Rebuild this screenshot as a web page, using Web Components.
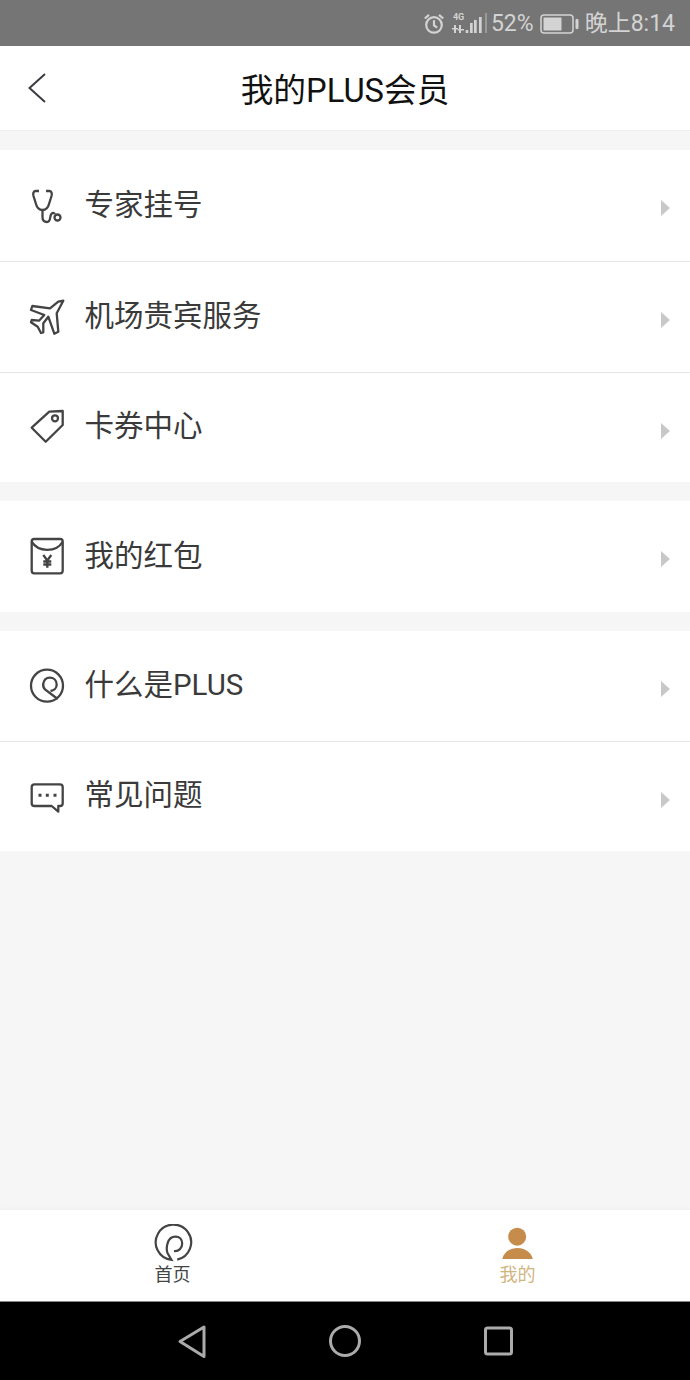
<!DOCTYPE html>
<html>
<head>
<meta charset="utf-8">
<style>
  html, body { margin: 0; padding: 0; background: #f6f6f6; }
  body { width: 690px; height: 1380px; font-family: Roboto, "Noto Sans CJK SC", sans-serif; }
  #app { display: flex; flex-direction: column; height: 1380px; }
</style>
</head>
<body>
<div id="app">
  <status-bar></status-bar>
  <title-bar>我的PLUS会员</title-bar>
  <menu-group style="margin-top:19px">
    <menu-row icon="stethoscope" h="112" pb="7">专家挂号</menu-row>
    <menu-row icon="plane" h="111" pb="9">机场贵宾服务</menu-row>
    <menu-row icon="tag" h="109" pb="9" last>卡券中心</menu-row>
  </menu-group>
  <menu-group style="margin-top:19px">
    <menu-row icon="packet" h="111" pb="7" last>我的红包</menu-row>
  </menu-group>
  <menu-group style="margin-top:19px">
    <menu-row icon="plus" h="111" pb="9">什么是PLUS</menu-row>
    <menu-row icon="chat" h="109" pb="9" last>常见问题</menu-row>
  </menu-group>
  <tab-bar></tab-bar>
  <nav-bar></nav-bar>
</div>

<script>
// icons for the menu rows, all drawn on a 40x40 box
const ICONS = {
  stethoscope: `<path d="M11 5H7.500C5 5 5 8 5.500 10L8 18C9 22 11 24 14.500 24C18 24 20 22 21 18L23.500 10C24 8 24 5 21.500 5H18"/><path d="M14.500 24V31C14.500 35 17 36 19 36C22 36 22 33 22.500 30C23 27 25.500 26 27 28"/><circle cx="29.500" cy="31.500" r="3"/>`,
  plane: `<path d="M35.300 2.700L28.700 15.300L30.300 33.700L26.300 35.700L20.300 18.700L15.300 25.300L15.300 34.300L13 35L9.700 28.700L3 24.300L3.700 22L11 22.700L16.300 17L3 12L4.300 8L22 10.300L30.300 3.700Z" stroke-linejoin="round"/>`,
  tag: `<path d="M21.300 2.700L34.700 2V16L17.700 32.700L3.700 18.700Z" stroke-linejoin="round"/><circle cx="27" cy="9.300" r="3"/>`,
  packet: `<rect x="3.700" y="2" width="31" height="34.300" rx="2.500"/><path d="M3.700 4.700C10 15.500 28.500 15.500 34.700 4.700"/><path d="M15.300 18L19.300 23.500L23.300 18M19.300 23.500V30.700M15.300 24.500H23.300M15.300 27.500H23.300"/>`,
  plus: `<circle cx="19" cy="18.700" r="16"/><path d="M29.700 32L17 22.500C15 20.500 15 18 15.300 16.500C16 13 18.500 10.700 21.700 10.700C25.700 10.700 28.700 13.500 28.700 17.500C28.700 21 26 23.500 22.500 24"/>`,
  chat: `<path d="M6.500 6.300H32C34 6.300 34.700 7.300 34.700 9V25.500C34.700 27 34 28 32 28H30.300V33.700L23.700 28H6.500C4.500 28 3.700 27 3.700 25.500V9C3.700 7.300 4.500 6.300 6.500 6.300Z" stroke-linejoin="round"/><path d="M10.500 17.300H13.500M17.800 17.300H20.800M25.500 17.300H28.500" stroke-width="3"/>`
};

class StatusBar extends HTMLElement {
  constructor() {
    super();
    this.attachShadow({mode: 'open'}).innerHTML = `
    <style>
      :host { display: flex; flex: none; height: 46px; box-sizing: border-box; background: #757575; color: #d3d3d3;
        align-items: center; justify-content: flex-end; padding: 2px 15px 0 0; font-size: 23px; line-height: 44px; }
      svg { display: block; flex: none; }
      .pct { margin-left: 3px; }
      .batt { margin-left: 6px; }
      .time { margin-left: 6px; }
      .net { font: bold 9px/9px Roboto, sans-serif; }
      .sig { position: relative; margin-left: 7px; width: 36px; height: 24px; flex: none; }
      .sig span { position: absolute; left: 1px; top: 1px; }
    </style>
    <svg width="22" height="24" viewBox="0 0 24 24" fill="none" stroke="#d3d3d3" stroke-width="2.400">
      <circle cx="12" cy="13" r="8.500"/><path d="M12 8v5.500l3.500 2.500M2 6l4.500-4M22 6l-4.500-4"/>
    </svg>
    <div class="sig"><span class="net">4G</span>
      <svg width="36" height="24" viewBox="0 0 36 24" fill="#d3d3d3">
        <path d="M2 13h2v8H2zM7 13h2v8H7zM0 16h6v1.500H0zM6 17h6v1.500H6z"/>
        <path d="M13.700 18h2.600v3h-2.600zM18 11h2.700v10H18zM22 8h2.700v13H22zM27 5h2.700v16H27z"/>
        <path d="M33 1h2v20h-2z" fill="#9a9a9a"/>
      </svg>
    </div>
    <span class="pct">52%</span>
    <svg class="batt" width="39" height="20" viewBox="0 0 39 20">
      <rect x="1" y="1" width="32" height="18" rx="3" fill="none" stroke="#d3d3d3" stroke-width="1.500"/>
      <rect x="3.500" y="3.500" width="18" height="13" fill="#d3d3d3"/>
      <rect x="35.500" y="5" width="3" height="10" rx="1" fill="#d3d3d3"/>
    </svg>
    <span class="time">晚上8:14</span>`;
  }
}
customElements.define('status-bar', StatusBar);

class TitleBar extends HTMLElement {
  constructor() {
    super();
    this.attachShadow({mode: 'open'}).innerHTML = `
    <style>
      :host { display: flex; flex: none; height: 85px; box-sizing: border-box; background: #fff; border-bottom: 1px solid #eeeeee;
        align-items: center; justify-content: center; position: relative; color: #111; font-size: 32.700px; padding-bottom: 2px; }
      svg { position: absolute; left: 28px; top: 27px; }
    </style>
    <svg width="20" height="32" viewBox="0 0 20 32" fill="none" stroke="#3b3b45" stroke-width="2"><path d="M17 1L1.500 15L17 29"/></svg>
    <slot></slot>`;
  }
}
customElements.define('title-bar', TitleBar);

class MenuGroup extends HTMLElement {
  constructor() {
    super();
    this.attachShadow({mode: 'open'}).innerHTML = `
    <style>:host { display: block; flex: none; background: #fff; }</style>
    <slot></slot>`;
  }
}
customElements.define('menu-group', MenuGroup);

class MenuRow extends HTMLElement {
  constructor() {
    super();
    this.attachShadow({mode: 'open'});
  }
  connectedCallback() {
    let icon = ICONS[this.getAttribute('icon')];
    let line = this.hasAttribute('last') ? '' : 'border-bottom: 1px solid #e6e6e6;';
    this.shadowRoot.innerHTML = `
    <style>
      :host { display: flex; height: ${this.getAttribute('h')}px; box-sizing: border-box; ${line}
        align-items: center; color: #3a3a3a; font-size: 29.500px; padding: 0 20px ${this.getAttribute('pb')}px 28px; }
      svg.i { flex: none; align-self: flex-start; margin: 36px 16.500px 0 0; }
      .txt { flex: 1; }
      svg.a { flex: none; align-self: flex-start; margin-top: 50px; }
    </style>
    <svg class="i" width="40" height="40" viewBox="0 0 40 40" fill="none" stroke="#444" stroke-width="2.300">${icon}</svg>
    <span class="txt"><slot></slot></span>
    <svg class="a" width="9" height="16" viewBox="0 0 9 16"><path d="M0 0L9 8L0 16Z" fill="#c8c8c8"/></svg>`;
  }
}
customElements.define('menu-row', MenuRow);

class TabBar extends HTMLElement {
  constructor() {
    super();
    this.attachShadow({mode: 'open'}).innerHTML = `
    <style>
      :host { display: grid; grid-template-columns: 1fr 1fr; flex: none; height: 92px; margin-top: auto; background: #fff;
        box-shadow: 0 -1px 3px #eeeeee; border-bottom: 1px solid #888; box-sizing: border-box; }
      .tab { display: flex; flex-direction: column; align-items: center; padding-top: 14px; font-size: 18px; line-height: 24px; color: #444; }
      .tab.on { color: #d1b57f; }
      svg { display: block; height: 38px; width: 40px; margin-bottom: 1px; }
    </style>
    <div class="tab">
      <svg viewBox="0 0 40 38" fill="none" stroke="#444" stroke-width="2.200">
        <path d="M24.200 35.600A17.700 17.700 0 1 0 18.500 35.900L14.500 29C13 25 13.500 12.700 22.500 12.700C26.500 12.700 29.200 15.500 29.200 19.500C29.200 24 26 27.500 21 27"/>
      </svg>
      <span>首页</span>
    </div>
    <div class="tab on">
      <svg viewBox="0 0 40 38" fill="#c68c4c">
        <circle cx="19.200" cy="12.700" r="9"/><path d="M4.200 35C6 28 12 24 19.500 24C27 24 33 28 34.800 35Z"/>
      </svg>
      <span>我的</span>
    </div>`;
  }
}
customElements.define('tab-bar', TabBar);

class NavBar extends HTMLElement {
  constructor() {
    super();
    this.attachShadow({mode: 'open'}).innerHTML = `
    <style>
      :host { display: block; flex: none; height: 78px; background: #000; }
      svg { display: block; }
    </style>
    <svg width="690" height="78" viewBox="0 0 690 78" fill="none" stroke="#ababab" stroke-width="3" stroke-linejoin="round">
      <path d="M180 39.500L204 25V54.500Z"/>
      <circle cx="345" cy="39" r="14.500"/>
      <rect x="485.500" y="26" width="26" height="26" rx="2"/>
    </svg>`;
  }
}
customElements.define('nav-bar', NavBar);
</script>
</body>
</html>
